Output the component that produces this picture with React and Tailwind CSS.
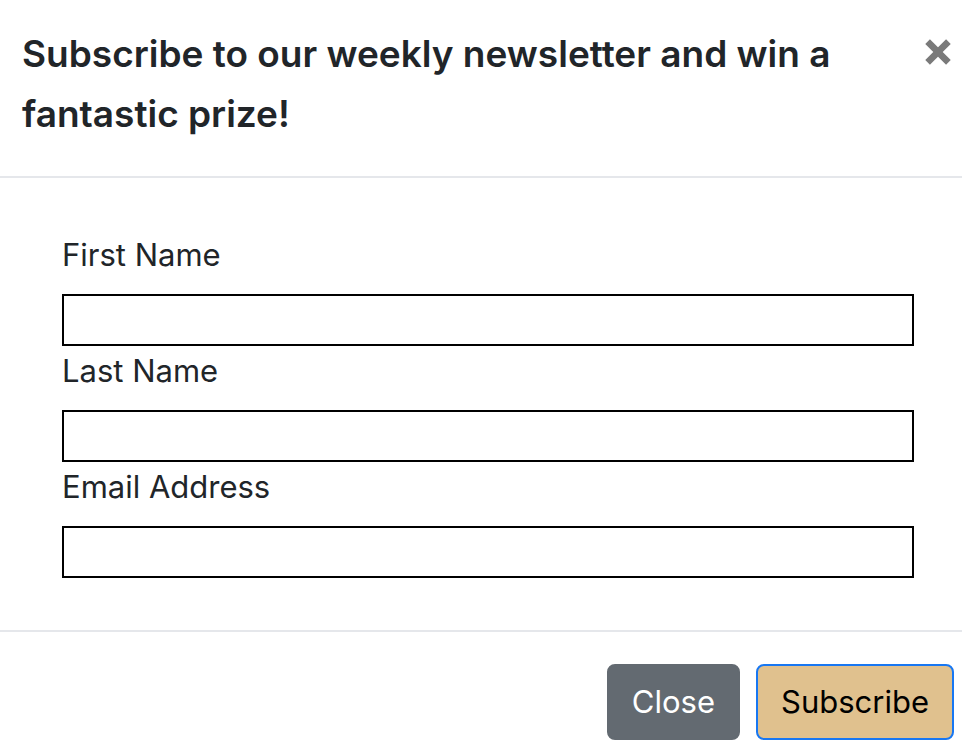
import { useState } from "react";

const fields = [
  { id: "first-name", label: "First Name", type: "text" },
  { id: "last-name", label: "Last Name", type: "text" },
  { id: "email", label: "Email Address", type: "email" },
];

export default function App() {
  const [values, setValues] = useState({});
  return (
    <form
      className="w-full bg-white font-['Inter',sans-serif] text-[31px] leading-[50px] text-[#212529]"
      onSubmit={(e) => e.preventDefault()}
    >
      <header className="flex items-start justify-between border-b-2 border-[#e5e7eb] pt-6 pr-2 pb-8 pl-[22px]">
        <h1 className="max-w-[860px] text-[37px] leading-[60px] font-semibold">
          Subscribe to our weekly newsletter and win a fantastic prize!
        </h1>
        <button type="button" aria-label="Dismiss" className="mt-3 p-0 text-[#7a7a7a]">
          <svg viewBox="0 0 32 32" className="size-8" fill="none" stroke="currentColor" strokeWidth="6.6">
            <path d="M5.6 5.6 26.4 26.4M26.4 5.6 5.6 26.4" />
          </svg>
        </button>
      </header>

      <div className="flex flex-col pt-[52px] pr-12 pb-[52px] pl-[62px]">
        {fields.map((f) => (
          <div key={f.id} className="flex flex-col">
            <label htmlFor={f.id} className="mb-[14px]">
              {f.label}
            </label>
            <input
              id={f.id}
              type={f.type}
              value={values[f.id] || ""}
              onChange={(e) => setValues({ ...values, [f.id]: e.target.value })}
              className="h-13 w-full border-2 border-black bg-white px-1 outline-none"
            />
          </div>
        ))}
      </div>

      <footer className="flex justify-end gap-4 border-t-2 border-[#e5e7eb] pt-8 pr-2 pb-3">
        <button type="button" className="h-[76px] rounded-lg border-2 border-[#636a71] bg-[#636a71] px-[23px] text-white">
          Close
        </button>
        <button
          type="submit"
          className="h-[76px] rounded-lg border-2 border-[#1877f2] bg-[#e0c18e] px-[23px] text-black"
        >
          Subscribe
        </button>
      </footer>
    </form>
  );
}
